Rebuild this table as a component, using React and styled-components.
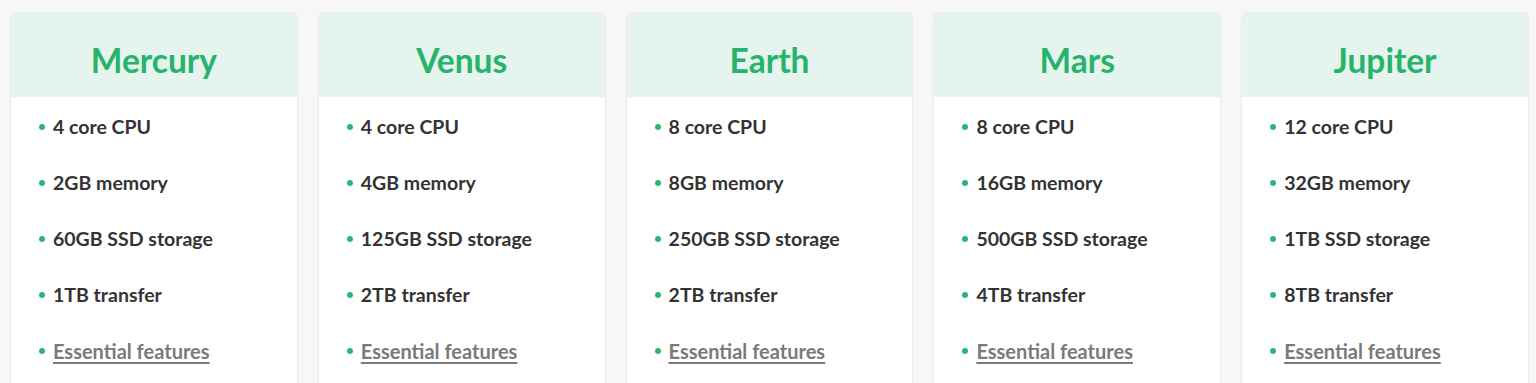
import React from "react";
import styled, { createGlobalStyle } from "styled-components";

const Global = createGlobalStyle`
  html, body { margin: 0; padding: 0; background: #f7f7f7; }
  body { font-family: Lato, "Open Sans", sans-serif; overflow: hidden; }
`;

const Grid = styled.div`
  display: grid;
  grid-template-columns: repeat(5, 1fr);
  gap: 22px;
  padding: 13px 8px 0 11px;
  height: 383px;
  box-sizing: border-box;
  overflow: hidden;
`;

const Card = styled.div`
  background: #fff;
  border-radius: 4px 4px 0 0;
  box-shadow: 0 0 0 1px #ececec, 0 1px 3px rgba(0, 0, 0, 0.06);
  overflow: hidden;
`;

const Header = styled.div`
  background: #e6f4ee;
  padding: 27px 0 16px;
  text-align: center;
`;

const Title = styled.h2`
  margin: 0;
  font-size: 33.5px;
  line-height: 41px;
  font-weight: 700;
  color: #27b36b;
`;

const List = styled.ul`
  list-style: none;
  margin: 0;
  padding: 18px 0 0 28px;
`;

const Item = styled.li`
  display: flex;
  align-items: center;
  gap: 8px;
  font-size: 19.5px;
  line-height: 24px;
  font-weight: 700;
  color: #333;
  margin-bottom: 32px;
  &::before {
    content: "";
    width: 6px;
    height: 6px;
    border-radius: 50%;
    background: #2bb673;
    flex: none;
  }
`;

const Link = styled.a`
  color: #7a7a7a;
  font-size: 20px;
  text-decoration: underline;
  text-underline-offset: 3px;
  text-decoration-thickness: 2px;
`;

const plans = [
  { name: "Mercury", cpu: 4, mem: "2GB", ssd: "60GB", tx: "1TB" },
  { name: "Venus", cpu: 4, mem: "4GB", ssd: "125GB", tx: "2TB" },
  { name: "Earth", cpu: 8, mem: "8GB", ssd: "250GB", tx: "2TB" },
  { name: "Mars", cpu: 8, mem: "16GB", ssd: "500GB", tx: "4TB" },
  { name: "Jupiter", cpu: 12, mem: "32GB", ssd: "1TB", tx: "8TB" },
];

export default function App() {
  return (
    <>
      <Global />
      <Grid>
        {plans.map((p) => (
          <Card key={p.name}>
            <Header>
              <Title>{p.name}</Title>
            </Header>
            <List>
              <Item>{p.cpu} core CPU</Item>
              <Item>{p.mem} memory</Item>
              <Item>{p.ssd} SSD storage</Item>
              <Item>{p.tx} transfer</Item>
              <Item>
                <Link href="#">Essential features</Link>
              </Item>
            </List>
          </Card>
        ))}
      </Grid>
    </>
  );
}
